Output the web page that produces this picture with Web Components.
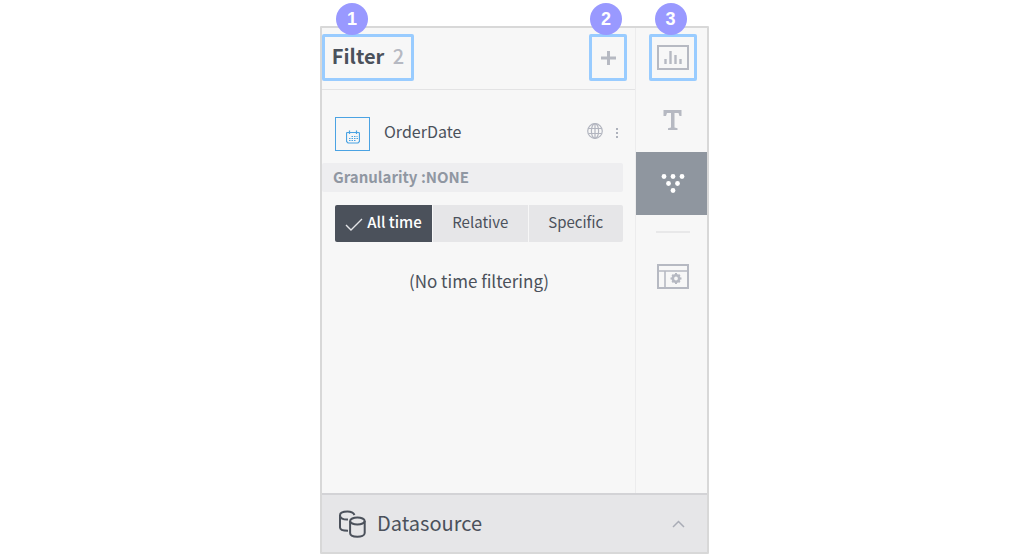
<!DOCTYPE html>
<html lang="en">
<head>
<meta charset="utf-8">
<title>Dashboard filters</title>
<style>
  body { margin: 0; background: #fff; color: #4b515b; font-family: "Noto Sans CJK KR", "Noto Sans CJK SC", sans-serif; }
</style>
</head>
<body>
<filter-page></filter-page>

<template id="filter-page">
  <style>
    :host { display: flex; justify-content: center; box-sizing: border-box; min-height: 100vh; padding: 26px 0 3px 2px; }
    main { display: flex; flex-direction: column; box-sizing: border-box; width: 100%; max-width: 389px; border: 2px solid #d8d8d8; border-radius: 1px; background: #f7f7f7; }
    .columns { display: flex; flex: 1; }
    filter-panel { flex: 1; }
  </style>
  <main>
    <div class="columns">
      <filter-panel></filter-panel>
      <tool-rail></tool-rail>
    </div>
    <data-source></data-source>
  </main>
</template>

<template id="call-out">
  <style>
    :host { display: flex; position: relative; box-sizing: border-box; height: 47px; border: 3px solid #99ccff; border-radius: 2px; align-items: center; justify-content: center; }
    .badge { position: absolute; left: calc(50% - 18px); top: -34px; width: 32px; height: 32px; border-radius: 50%; background: #9999ff; color: #fff; font: bold 18px/32px "Liberation Sans", sans-serif; text-align: center; }
    :host([start]) .badge { left: 11px; }
  </style>
  <slot></slot><span class="badge"></span>
</template>

<template id="filter-panel">
  <style>
    :host { display: block; min-width: 0; }
    header { display: flex; justify-content: space-between; box-sizing: border-box; height: 62px; padding: 6px 8px 0 0; border-bottom: 1px solid #e3e3e4; }
    h1 { margin: 0; padding-bottom: 4px; font-size: 20px; line-height: 30px; font-weight: 700; }
    h1 span { color: #b6b9c2; font-weight: 500; margin-left: 4px; }
    .title { width: 92px; }
    .add { width: 38px; }
    button { border: 0; padding: 0; margin: 0; background: none; font: inherit; color: inherit; }
    svg { display: block; }
    .field { display: flex; align-items: center; height: 34px; padding: 27px 16px 12px 13px; }
    .date { display: flex; box-sizing: border-box; width: 35px; height: 34px; border: 1px solid #4ba3e3; align-items: center; justify-content: center; padding-top: 6px; }
    .name { flex: 1; margin: 0; padding: 0 0 6px 14px; font-size: 16px; line-height: 24px; font-weight: 400; }
    .actions { display: flex; align-items: center; gap: 12px; padding-bottom: 6px; }
    .actions button { padding-top: 3px; }
    .grain { margin: 0 12px 0 0; padding: 0 0 2px 11px; background: #eeeef0; font-size: 15px; line-height: 27px; font-weight: 700; color: #9097a2; border-radius: 2px; }
    .tabs { display: grid; grid-template-columns: 97px 1fr 1fr; gap: 1px; margin: 13px 12px 0 13px; }
    .tabs button { display: flex; align-items: center; justify-content: center; gap: 4px; height: 37px; padding-bottom: 4px; background: #e6e6e8; font-size: 15px; }
    .tabs svg { margin-top: 4px; }
    .tabs button.on { background: #4b515b; color: #fff; font-weight: 500; border-radius: 2px 0 0 2px; }
    .tabs button:last-child { border-radius: 0 2px 2px 0; }
    .none { margin: 26px 12px 0 13px; font-size: 17px; line-height: 26px; text-align: center; }
  </style>
  <header>
    <call-out class="title" n="1" start><h1>Filter <span>2</span></h1></call-out>
    <call-out class="add" n="2"><button aria-label="Add filter"><svg width="16" height="16" viewBox="0 0 16 16"><path d="M8.500 1v14M1 8h15" stroke="#b6b9c2" stroke-width="3" fill="none"/></svg></button></call-out>
  </header>
  <section class="field">
    <span class="date"><svg width="14" height="14" viewBox="0 0 14 14" fill="none" stroke="#4ba3e3"><path d="M1.500 2.500h11q1 0 1 1v8l-1.500 1.500h-10L.5 11.500V3.500q0-1 1-1z" stroke-width="1.200"/><path d="M3.500 .5v3.500M10.500 .5v3.500" stroke-width="1.200"/><path d="M5.500 6.500h6M3 8.500h9M3 10.500h7" stroke-dasharray="1.500 1"/></svg></span>
    <h2 class="name">OrderDate</h2>
    <span class="actions">
      <svg width="16" height="16" viewBox="0 0 16 16" fill="none" stroke="#b2b5bf" stroke-width="1.200"><circle cx="8" cy="8" r="7.300"/><ellipse cx="8" cy="8" rx="3.600" ry="7.300"/><path d="M8 .7v14.600M1.500 5.500h13M1.500 10.500h13"/></svg>
      <button aria-label="More"><svg width="4" height="12" viewBox="0 0 4 12" fill="#aeb2bc"><path d="M1 1h2v2H1zM1 5h2v2H1zM1 9h2v2H1z"/></svg></button>
    </span>
  </section>
  <p class="grain">Granularity :NONE</p>
  <div class="tabs">
    <button class="on"><svg width="18" height="14" viewBox="0 0 18 14"><path d="M1 8l5 5L17 2" fill="none" stroke="#e4e5e8" stroke-width="1.400"/></svg>All time</button>
    <button>Relative</button>
    <button>Specific</button>
  </div>
  <p class="none">(No time filtering)</p>
</template>

<template id="tool-rail">
  <style>
    :host { display: grid; grid-template-rows: 59px 65px 63px auto auto; align-content: start; box-sizing: border-box; width: 72px; border-left: 1px solid #ececed; }
    .item { display: flex; align-items: center; justify-content: center; padding: 0 0 0 2px; border: 0; background: none; }
    .on { background: #8f969f; }
    call-out { width: 48px; }
    call-out button { border: 0; padding: 0; background: none; }
    svg { display: block; }
    hr { width: 34px; height: 2px; border: 0; margin: 16px 0 0 20px; background: #e8e8e9; }
    .last { height: 86px; }
  </style>
  <div class="item"><call-out n="3"><button aria-label="Chart"><svg width="32" height="25" viewBox="0 0 32 25"><path d="M1 1h30v23H1z" fill="none" stroke="#b6b9c2" stroke-width="2"/><path d="M8.500 19v-5M13.500 19V6M18.500 19v-9M23.500 19v-5" stroke="#b6b9c2" stroke-width="2.400"/></svg></button></call-out></div>
  <button class="item" aria-label="Text"><svg width="19" height="22" viewBox="0 0 19 22"><path d="M0.500 1h18v6h-2l-1-3h-4v14.500l3 .8V21h-9.500v-1.700l3-.8V4h-4l-1 3h-2.500z" fill="#b6b9c2"/></svg></button>
  <button class="item on" aria-label="Filter"><svg width="24" height="20" viewBox="0 0 24 20" fill="#fff"><circle cx="3" cy="2.500" r="2.400"/><circle cx="12" cy="2.500" r="2.400"/><circle cx="21" cy="2.500" r="2.400"/><circle cx="7.500" cy="9.500" r="2.400"/><circle cx="16.500" cy="9.500" r="2.400"/><circle cx="12" cy="16.500" r="2.400"/></svg></button>
  <hr>
  <button class="item last" aria-label="Layout settings"><svg width="32" height="25" viewBox="0 0 32 25" fill="none" stroke="#b6b9c2"><path d="M1 1h30v23H1z" stroke-width="2"/><path d="M1 7h30M8 7v17" stroke-width="1.600"/><circle cx="19" cy="14.500" r="3.200" stroke-width="2.600"/><path d="M19 9v2M19 18v2M13.500 14.500h2M22.500 14.500h2M15.200 10.700l1.300 1.300M21.500 17l1.300 1.300M22.800 10.700l-1.300 1.300M16.500 17l-1.300 1.300" stroke-width="2"/></svg></button>
</template>

<template id="data-source">
  <style>
    :host { display: block; border-top: 2px solid #d3d3d6; background: #e6e6e8; }
    button { display: flex; width: 100%; height: 57px; align-items: center; border: 0; margin: 0; padding: 0 22px 0 16px; background: none; font: inherit; font-size: 20px; line-height: 28px; color: inherit; text-align: left; }
    span { flex: 1; padding: 0 0 2px 11px; }
    svg { display: block; }
  </style>
  <button><svg width="28" height="28" viewBox="0 0 28 28" fill="none" stroke="#4b515b" stroke-width="2"><path d="M16.500 5C15.500 3 13 1.600 9.500 1.600C5 1.600 2 3 2 5.200V17.500C2 19.500 5 20.700 10 20.700"/><path d="M2 5.200C2 8 5 9.800 10 9.500"/><ellipse cx="19.400" cy="11" rx="7.300" ry="3.500"/><path d="M12.100 11V23c0 5 14.600 5 14.600 0V11"/></svg><span>Datasource</span><svg width="13" height="8" viewBox="0 0 13 8"><path d="M1 7l5.500-5.500L12 7" fill="none" stroke="#a9acb6" stroke-width="1.500"/></svg></button>
</template>

<script>
  class Templated extends HTMLElement {
    constructor() {
      super();
      this.attachShadow({ mode: 'open' }).append(document.getElementById(this.localName).content.cloneNode(true));
    }
  }
  class CallOut extends Templated {
    connectedCallback() { this.shadowRoot.querySelector('.badge').textContent = this.getAttribute('n'); }
  }
  customElements.define('call-out', CallOut);
  customElements.define('filter-panel', class extends Templated {});
  customElements.define('tool-rail', class extends Templated {});
  customElements.define('data-source', class extends Templated {});
  customElements.define('filter-page', class extends Templated {});
</script>
</body>
</html>
